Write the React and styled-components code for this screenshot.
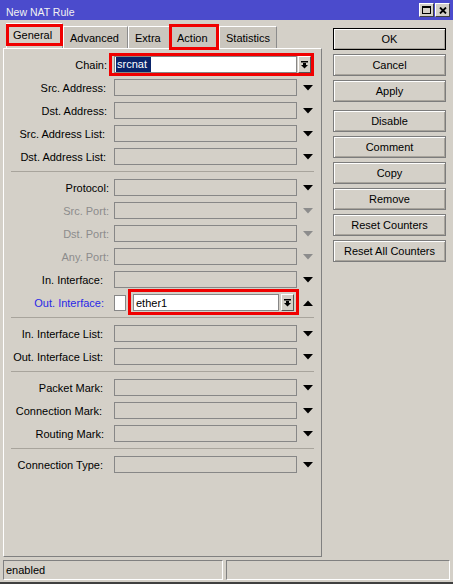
import React from 'react';
import styled, { createGlobalStyle } from 'styled-components';

const GlobalStyle = createGlobalStyle`
  html, body {
    margin: 0;
    padding: 0;
    background: #d4d0c8;
  }
  body {
    font-family: "Liberation Sans", Arial, sans-serif;
    font-size: 11px;
    color: #000;
  }
`;

const Window = styled.div`
  width: 453px;
  height: 584px;
  box-sizing: border-box;
  background: #d4d0c8;
  display: flex;
  flex-direction: column;
  overflow: hidden;
  border-bottom: 2px solid #404040;
`;

const TitleBar = styled.div`
  height: 20px;
  flex: none;
  background: #4b4bcc;
  display: flex;
  align-items: center;
  justify-content: space-between;
  padding: 0 3px 0 6px;
  color: #f2f2f2;
  font-size: 10.5px;
`;

const TitleText = styled.span`
  padding-top: 3px;
`;

const TitleButtons = styled.div`
  display: flex;
  gap: 1px;
`;

const TitleButton = styled.div`
  width: 15px;
  height: 14px;
  box-sizing: border-box;
  background: #d4d0c8;
  border: 1px solid;
  border-color: #fff #404040 #404040 #fff;
  display: flex;
  align-items: center;
  justify-content: center;
`;

const Body = styled.div`
  display: flex;
  gap: 11px;
  padding: 0 7px 0 3px;
`;

const LeftColumn = styled.div`
  width: 319px;
  display: flex;
  flex-direction: column;
`;

const TabRow = styled.div`
  height: 25px;
  margin-top: 3px;
  padding-left: 3px;
  display: flex;
  align-items: flex-end;
`;

const Tab = styled.div`
  position: relative;
  width: ${p => p.$w}px;
  height: ${p => (p.$active ? 25 : 22)}px;
  box-sizing: border-box;
  padding-left: 6px;
  padding-top: 5px;
  background: ${p => (p.$active ? '#d4d0c8' : '#cac6be')};
  border-top: 1px solid #fff;
  border-left: 1px solid #fff;
  border-right: 1px solid #8c8c8c;
  white-space: nowrap;
`;

const RedMark = styled.div`
  position: absolute;
  top: ${p => p.$t}px;
  bottom: ${p => p.$b}px;
  left: ${p => p.$l}px;
  right: ${p => p.$r}px;
  border: 3px solid #f00000;
  pointer-events: none;
`;

const Panel = styled.div`
  height: 509px;
  box-sizing: border-box;
  border-top: 1px solid #fff;
  border-left: 1px solid #fff;
  border-right: 1px solid #808080;
  border-bottom: 1px solid #808080;
`;

const Section = styled.div`
  display: flex;
  flex-direction: column;
  gap: 6px;
  padding: 7px 0 6px;
`;

const Divider = styled.div`
  height: 1px;
  margin: 0 7px;
  background: #a8a49c;
`;

const Row = styled.div`
  display: flex;
  align-items: center;
  height: 17px;
`;

const Label = styled.div`
  width: 106px;
  box-sizing: border-box;
  padding-right: ${p => p.$pr}px;
  text-align: right;
  white-space: nowrap;
  color: ${p => p.$color || '#000'};
`;

const Field = styled.div`
  margin-left: 4px;
  width: 183px;
  height: 17px;
  box-sizing: border-box;
  border: 1px solid #878787;
  background: #d4d0c8;
`;

const ArrowCell = styled.div`
  width: 21px;
  display: flex;
  justify-content: center;
  margin-left: ${p => p.$ml || 0}px;
`;

const ComboBox = styled.div`
  position: relative;
  display: flex;
  gap: ${p => p.$gap}px;
  margin-left: ${p => p.$ml}px;
  padding-left: ${p => p.$pl}px;
`;

const WhiteInput = styled.div`
  width: ${p => p.$w}px;
  height: 17px;
  box-sizing: border-box;
  border: 1px solid #878787;
  background: #fff;
  display: flex;
  align-items: center;
  padding-left: ${p => p.$pl}px;
  white-space: nowrap;
`;

const Selected = styled.span`
  background: #0a246a;
  color: #fff;
  padding: 1px 4px 1px 1px;
  line-height: 13px;
`;

const DropButton = styled.div`
  width: 13px;
  height: 17px;
  box-sizing: border-box;
  background: #d4d0c8;
  border: 1px solid;
  border-color: #fff #555 #555 #fff;
  display: flex;
  align-items: center;
  justify-content: center;
`;

const CheckBox = styled.div`
  margin-left: 4px;
  width: 12px;
  height: 16px;
  box-sizing: border-box;
  border: 1px solid #878787;
  background: #fff;
`;

const ButtonColumn = styled.div`
  width: 113px;
  padding-top: 8px;
  display: flex;
  flex-direction: column;
  gap: 4px;
`;

const Button = styled.div`
  height: 22px;
  box-sizing: border-box;
  border: 1px solid ${p => (p.$default ? '#000' : '#7c7c7c')};
  box-shadow: inset 1px 1px 0 #fff, inset -1px -1px 0 #a8a49c;
  background: #d4d0c8;
  display: flex;
  align-items: center;
  justify-content: center;
  margin-top: ${p => p.$mt || 0}px;
  white-space: nowrap;
`;

const StatusBar = styled.div`
  margin-top: 3px;
  height: 20px;
  display: flex;
  gap: 3px;
  padding: 0 3px;
`;

const StatusCell = styled.div`
  width: ${p => (p.$w ? `${p.$w}px` : 'auto')};
  flex: ${p => (p.$w ? 'none' : 1)};
  box-sizing: border-box;
  border: 1px solid;
  border-color: #808080 #fff #fff #808080;
  padding-left: 2px;
  display: flex;
  align-items: center;
`;

const Down = ({ color = '#000' }) => (
  <svg width="10" height="6" viewBox="0 0 10 6">
    <polygon points="0,0 10,0 5,5.5" fill={color} />
  </svg>
);

const Up = () => (
  <svg width="10" height="6" viewBox="0 0 10 6">
    <polygon points="0,6 10,6 5,0.5" fill="#000" />
  </svg>
);

const DropIcon = () => (
  <svg width="7" height="8" viewBox="0 0 7 8">
    <rect x="0" y="0" width="7" height="1.5" fill="#000" />
    <rect x="2" y="2" width="3" height="2" fill="#000" />
    <polygon points="0,4 7,4 3.5,7.5" fill="#000" />
  </svg>
);

const sections = [
  [
    { label: 'Chain:', pr: 3, kind: 'chain' },
    { label: 'Src. Address:', pr: 4 },
    { label: 'Dst. Address:', pr: 3 },
    { label: 'Src. Address List:', pr: 5 },
    { label: 'Dst. Address List:', pr: 4 },
  ],
  [
    { label: 'Protocol:', pr: 1 },
    { label: 'Src. Port:', pr: 1, disabled: true },
    { label: 'Dst. Port:', pr: 1, disabled: true },
    { label: 'Any. Port:', pr: 1, disabled: true },
    { label: 'In. Interface:', pr: 7 },
    { label: 'Out. Interface:', pr: 6, kind: 'out' },
  ],
  [
    { label: 'In. Interface List:', pr: 7 },
    { label: 'Out. Interface List:', pr: 7 },
  ],
  [
    { label: 'Packet Mark:', pr: 7 },
    { label: 'Connection Mark:', pr: 8 },
    { label: 'Routing Mark:', pr: 6 },
  ],
  [
    { label: 'Connection Type:', pr: 7 },
  ],
];

const tabs = [
  { name: 'General', w: 57, active: true, mark: { t: 0, b: 2, l: -1, r: -1 } },
  { name: 'Advanced', w: 65 },
  { name: 'Extra', w: 42 },
  { name: 'Action', w: 49, mark: { t: -3, b: -2, l: -2, r: -1 } },
  { name: 'Statistics', w: 58 },
];

const buttons = ['OK', 'Cancel', 'Apply', 'Disable', 'Comment', 'Copy', 'Remove', 'Reset Counters', 'Reset All Counters'];

const FormRow = ({ row }) => {
  if (row.kind === 'chain') {
    return (
      <Row>
        <Label $pr={row.pr}>{row.label}</Label>
        <ComboBox $ml={2} $pl={2} $gap={1}>
          <WhiteInput $w={183} $pl={1}><Selected>srcnat</Selected></WhiteInput>
          <DropButton><DropIcon /></DropButton>
          <RedMark $t={-3} $b={-3} $l={-3} $r={-3} />
        </ComboBox>
      </Row>
    );
  }
  if (row.kind === 'out') {
    return (
      <Row>
        <Label $pr={row.pr} $color="#2828e6">{row.label}</Label>
        <CheckBox />
        <ComboBox $ml={7} $pl={0} $gap={2}>
          <WhiteInput $w={146} $pl={2}>ether1</WhiteInput>
          <DropButton><DropIcon /></DropButton>
          <RedMark $t={-5} $b={-4} $l={-5} $r={-5} />
        </ComboBox>
        <ArrowCell $ml={3}><Up /></ArrowCell>
      </Row>
    );
  }
  return (
    <Row>
      <Label $pr={row.pr} $color={row.disabled ? '#8c8c8c' : undefined}>{row.label}</Label>
      <Field />
      <ArrowCell><Down color={row.disabled ? '#8c8c8c' : '#000'} /></ArrowCell>
    </Row>
  );
};

export default function App() {
  return (
    <>
      <GlobalStyle />
      <Window>
        <TitleBar>
          <TitleText>New NAT Rule</TitleText>
          <TitleButtons>
            <TitleButton>
              <svg width="9" height="8" viewBox="0 0 9 8">
                <rect x="0.5" y="0.5" width="8" height="7" fill="none" stroke="#000" />
                <rect x="0" y="0" width="9" height="2" fill="#000" />
              </svg>
            </TitleButton>
            <TitleButton>
              <svg width="8" height="7" viewBox="0 0 8 7">
                <path d="M1 0.5 L7 6.5 M7 0.5 L1 6.5" stroke="#000" strokeWidth="1.8" />
              </svg>
            </TitleButton>
          </TitleButtons>
        </TitleBar>
        <Body>
          <LeftColumn>
            <TabRow>
              {tabs.map(t => (
                <Tab key={t.name} $w={t.w} $active={t.active}>
                  {t.name}
                  {t.mark && <RedMark $t={t.mark.t} $b={t.mark.b} $l={t.mark.l} $r={t.mark.r} />}
                </Tab>
              ))}
            </TabRow>
            <Panel>
              {sections.map((rows, idx) => (
                <React.Fragment key={idx}>
                  {idx > 0 && <Divider />}
                  <Section>
                    {rows.map(r => <FormRow key={r.label} row={r} />)}
                  </Section>
                </React.Fragment>
              ))}
            </Panel>
          </LeftColumn>
          <ButtonColumn>
            {buttons.map(b => (
              <Button key={b} $default={b === 'OK'} $mt={b === 'Disable' ? 4 : 0}>{b}</Button>
            ))}
          </ButtonColumn>
        </Body>
        <StatusBar>
          <StatusCell $w={220}>enabled</StatusCell>
          <StatusCell />
        </StatusBar>
      </Window>
    </>
  );
}
